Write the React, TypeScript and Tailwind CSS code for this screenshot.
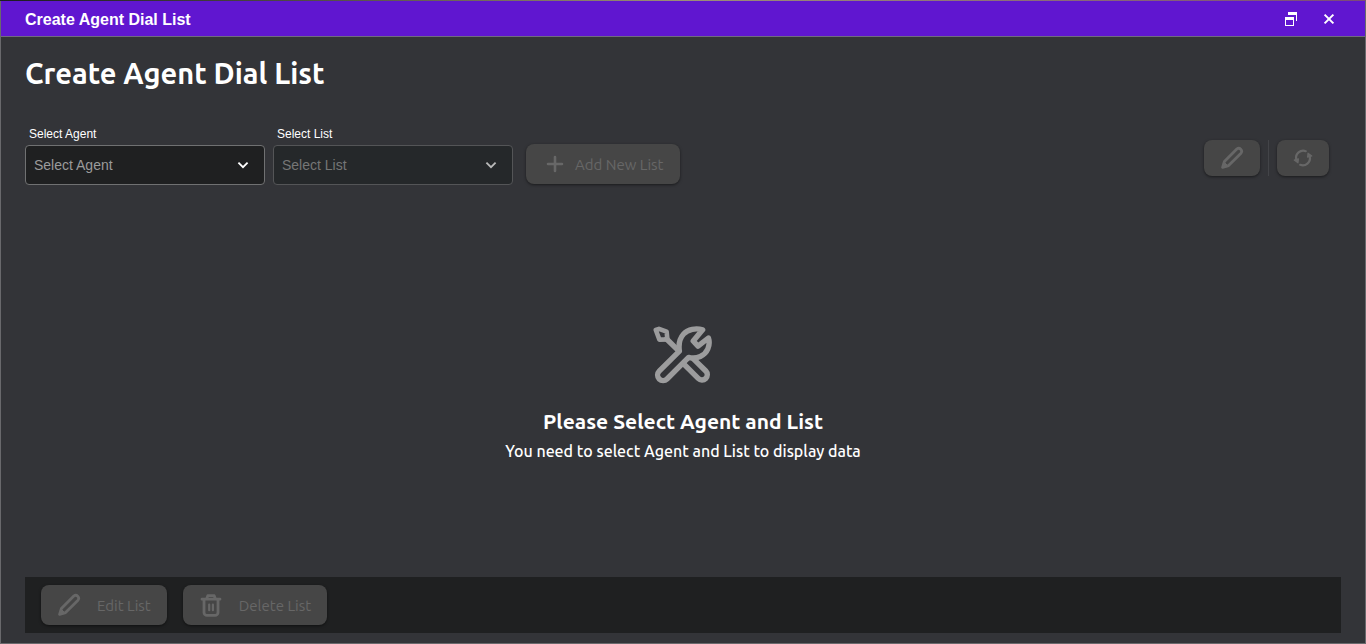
import React from 'react';

const PencilIcon: React.FC = () => (
  <svg className="size-6" viewBox="0 0 24 24" fill="none" stroke="currentColor" strokeWidth="2.8" strokeLinejoin="round" strokeLinecap="round" aria-hidden="true">
    <path d="M2.6 21.4 4.4 15.4 16.8 3a3 3 0 0 1 4.2 4.2L8.6 19.6Z" />
    <path d="m4.4 16.4 3.2 3.2-4.4 1.4Z" fill="currentColor" strokeWidth="1" />
  </svg>
);

const PlusIcon: React.FC = () => (
  <svg className="size-6" viewBox="0 0 24 24" fill="none" stroke="currentColor" strokeWidth="2.6" strokeLinecap="round" aria-hidden="true">
    <path d="M12 5v14M5 12h14" />
  </svg>
);

const RefreshIcon: React.FC = () => (
  <svg className="size-5" viewBox="0 0 20 20" fill="none" stroke="currentColor" strokeWidth="2.2" strokeLinecap="round" strokeLinejoin="round" aria-hidden="true">
    <path d="M3.2 11.4A7.2 7.2 0 0 1 12.8 3.2M16.8 8.6A7.2 7.2 0 0 1 7.2 16.8" />
    <path d="m1.2 12 4.2-1.2-.4 4ZM18.8 8l-4.2 1.2.4-4Z" fill="currentColor" strokeWidth="1.2" />
  </svg>
);

const TrashIcon: React.FC = () => (
  <svg className="size-6" viewBox="0 0 24 24" fill="none" stroke="currentColor" strokeWidth="2.8" strokeLinecap="round" strokeLinejoin="round" aria-hidden="true">
    <path d="M3 6.2h18M7.6 6 8.8 2.6h6.4L16.4 6M5 6.4v13a3 3 0 0 0 3 3h8a3 3 0 0 0 3-3v-13" />
    <path d="M10.2 11.6v5.6M13.9 11.6v5.6" strokeWidth="2.2" />
  </svg>
);

const ChevronIcon: React.FC<{ className: string }> = ({ className }) => (
  <svg className={className} viewBox="0 0 12 12" fill="none" stroke="currentColor" strokeWidth="1.8" aria-hidden="true">
    <path d="m1.4 3.6 4.6 4.6 4.6-4.6" />
  </svg>
);

const ToolsIcon: React.FC = () => (
  <svg className="size-[60px] text-[#9c9c9d]" viewBox="0 0 60 60" fill="none" stroke="currentColor" strokeWidth="5.4" strokeLinecap="round" strokeLinejoin="round" aria-hidden="true">
    <path d="M2.8 5 6 3.8l7.6 2.8.8 7.8-8 .2Z" strokeWidth="4.6" />
    <path d="m13.6 14 11.6 11.4" />
    <path d="m31.4 39.6 13.8 13.8a5.3 5.3 0 0 0 7.6-7.4L40.4 33.8" />
    <path d="M26.4 26.2 6.2 46.2a5.5 5.5 0 0 0 7.8 7.8L35.6 32.4C44 34.5 52 30.5 54.8 24c1.7-4 1.8-7.5.6-11L45 21.2 40.2 16l9.4-11.2C43 2.8 35 4.2 30.6 9c-4 4.4-5.2 10.5-4.2 17.2Z" />
  </svg>
);

const ListSelect: React.FC<{ id: string; label: string; disabled?: boolean }> = ({ id, label, disabled }) => (
  <div className="flex w-60 flex-col">
    <label htmlFor={id} className="px-1 pb-0.5 text-xs leading-[18px] text-white">{label}</label>
    <div className="relative">
      <select
        id={id}
        disabled={disabled}
        defaultValue=""
        className="h-10 w-full appearance-none rounded border border-[#707172] bg-[#1f2021] px-2 text-sm text-[#9b9b9b] opacity-100 disabled:border-[#545557] disabled:bg-[#25282a] disabled:text-[#757676]"
      >
        <option value="">{label}</option>
      </select>
      <ChevronIcon className={`pointer-events-none absolute right-4 top-3.5 size-3 ${disabled ? 'text-[#bababa]' : 'text-white'}`} />
    </div>
  </div>
);

const ActionButton: React.FC<{ label?: string; title?: string; className: string; children: React.ReactNode }> = ({ label, title, className, children }) => (
  <button
    type="button"
    disabled
    aria-label={title}
    className={`flex items-center justify-center rounded-lg bg-[#464646] text-[#676767] shadow-[0_1px_3px_rgba(0,0,0,0.5)] ${className}`}
  >
    {children}
    {label && <span className="pt-0.5 font-['Ubuntu','Noto_Sans',sans-serif] text-[15px]">{label}</span>}
  </button>
);

const App: React.FC = () => {
  return (
    <div className="flex min-h-screen flex-col bg-[#333438] font-['Liberation_Sans',Arial,sans-serif]">
      <div className="h-px bg-linear-to-r from-[#1c1b22] via-[#9c8f76] to-[#7b4a78]" />
      <div className="flex flex-1 flex-col border border-t-0 border-[#69696c]">
        <header className="flex h-9 items-center justify-between border-b border-[#706a80] bg-[#6016d0] pl-6 pr-[18px] text-white">
          <span className="pt-0.5 text-base font-bold">Create Agent Dial List</span>
          <div className="flex items-center">
            <button type="button" aria-label="Restore" className="flex w-10 items-center justify-center">
              <svg className="size-4" viewBox="0 0 16 16" fill="currentColor" shapeRendering="crispEdges" aria-hidden="true">
                <path d="M5 1h9v9h-1V4H5Z" />
                <path d="M2 6h9v9H2Zm1 3v5h7V9Z" fillRule="evenodd" />
              </svg>
            </button>
            <button type="button" aria-label="Close" className="flex w-9 items-center justify-center">
              <svg className="size-3" viewBox="0 0 12 12" stroke="currentColor" strokeWidth="2" aria-hidden="true">
                <path d="m1.6 1.6 8.8 8.8M10.4 1.6l-8.8 8.8" />
              </svg>
            </button>
          </div>
        </header>

        <main className="flex flex-1 flex-col px-6 pb-2.5 pt-4">
          <h1 className="font-['Ubuntu','Noto_Sans',sans-serif] text-[29px] font-bold leading-10 text-white">Create Agent Dial List</h1>

          {/* Filters and list tools */}
          <div className="mt-8 flex items-start justify-between pr-3">
            <div className="flex items-start">
              <div className="flex gap-2">
                <ListSelect id="agent" label="Select Agent" />
                <ListSelect id="list" label="Select List" disabled />
              </div>
              <div className="pl-[13px] pt-[19px]">
                <ActionButton label="Add New List" className="h-10 gap-2 px-[17px]">
                  <PlusIcon />
                </ActionButton>
              </div>
            </div>
            <div className="flex items-center gap-2 pt-[15px]">
              <ActionButton title="Edit" className="h-9 w-14">
                <PencilIcon />
              </ActionButton>
              <div className="h-9 w-px bg-[#434448]" />
              <ActionButton title="Refresh" className="h-9 w-[52px]">
                <RefreshIcon />
              </ActionButton>
            </div>
          </div>

          {/* Empty state */}
          <div className="flex flex-1 flex-col items-center justify-center pt-7 font-['Ubuntu','Noto_Sans',sans-serif] text-white">
            <ToolsIcon />
            <h2 className="mt-6 text-[21px] font-bold leading-6">Please Select Agent and List</h2>
            <p className="mt-1 text-base font-medium leading-7">You need to select Agent and List to display data</p>
          </div>

          <footer className="flex gap-4 bg-[#1f2021] px-4 py-2">
            <ActionButton label="Edit List" className="h-10 gap-4 px-4">
              <PencilIcon />
            </ActionButton>
            <ActionButton label="Delete List" className="h-10 gap-4 px-4">
              <TrashIcon />
            </ActionButton>
          </footer>
        </main>
      </div>
    </div>
  );
};

export default App;
